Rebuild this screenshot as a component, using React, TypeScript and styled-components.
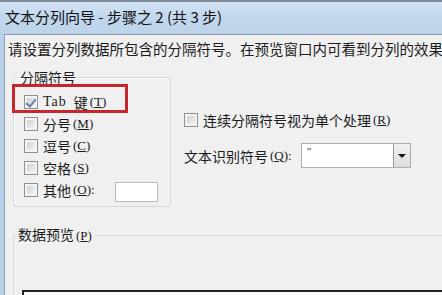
import styled, {createGlobalStyle} from 'styled-components';

const GlobalStyle = createGlobalStyle`
  html, body {
    margin: 0;
    padding: 0;
    background: #f0f0f0;
  }
  body {
    font-family: "Noto Sans CJK SC", "Noto Sans", sans-serif;
    color: #1b1b1b;
  }
`;

const separators = [
  {label: '分号', key: 'M'},
  {label: '逗号', key: 'C'},
  {label: '空格', key: 'S'},
];

export default function App() {
  return (
    <>
      <GlobalStyle />
      <Window>
        <TitleBar>文本分列向导 - 步骤之 2 (共 3 步)</TitleBar>
        <Frame>
          <Body>
            <Instruction>请设置分列数据所包含的分隔符号。在预览窗口内可看到分列的效果</Instruction>
            <Options>
              <GroupBox $width={158}>
                <Legend>分隔符号</Legend>
                <OptionRow $highlight>
                  <CheckBox>
                    <CheckMark />
                  </CheckBox>
                  <TabText>Tab</TabText>
                  <Label>键</Label>
                  <Mnemonic>
                    (<u>T</u>)
                  </Mnemonic>
                </OptionRow>
                {separators.map(item => (
                  <OptionRow key={item.key}>
                    <CheckBox />
                    <Label>{item.label}</Label>
                    <Mnemonic>
                      (<u>{item.key}</u>)
                    </Mnemonic>
                  </OptionRow>
                ))}
                <OptionRow>
                  <CheckBox />
                  <Label>其他</Label>
                  <Mnemonic>
                    (<u>O</u>):
                  </Mnemonic>
                  <OtherInput />
                </OptionRow>
              </GroupBox>

              <SideColumn>
                <OptionRow>
                  <CheckBox />
                  <Label>连续分隔符号视为单个处理</Label>
                  <Mnemonic>
                    (<u>R</u>)
                  </Mnemonic>
                </OptionRow>
                <QualifierRow>
                  <Label>文本识别符号</Label>
                  <Mnemonic>
                    (<u>Q</u>):
                  </Mnemonic>
                  <Combo>
                    <ComboValue>"</ComboValue>
                    <ComboButton>
                      <Arrow />
                    </ComboButton>
                  </Combo>
                </QualifierRow>
              </SideColumn>
            </Options>

            <PreviewGroup>
              <Legend>
                数据预览<Mnemonic>
                  (<u>P</u>)
                </Mnemonic>
              </Legend>
              <PreviewBox />
            </PreviewGroup>
          </Body>
        </Frame>
      </Window>
    </>
  );
}

const Window = styled.div`
  width: 442px;
  height: 295px;
  overflow: hidden;
  display: flex;
  flex-direction: column;
`;

const TitleBar = styled.div`
  height: 32px;
  box-sizing: border-box;
  border-top: 2px solid #7d8a99;
  padding: 4px 0 0 5px;
  background: linear-gradient(180deg, #d3e3f3 0%, #c3d8ee 45%, #bcd3ea 100%);
  font-size: 15px;
  line-height: 22px;
  color: #111;
  white-space: nowrap;
  flex-shrink: 0;
`;

const Frame = styled.div`
  flex: 1;
  display: flex;
  border-left: 4px solid #b8d0ea;
  padding-top: 2px;
  background: #bcd3ea;
`;

const Body = styled.div`
  flex: 1;
  background: #f0f0f0;
  border-left: 1px solid #8e9cad;
  border-top: 1px solid #8e9cad;
  padding: 5px 0 0 3px;
  min-width: 0;
`;

const Instruction = styled.div`
  font-size: 14.5px;
  line-height: 17px;
  white-space: nowrap;
`;

const Options = styled.div`
  display: flex;
  align-items: flex-start;
  gap: 13px;
  margin: 12px 0 0 5px;
`;

const GroupBox = styled.fieldset<{$width: number}>`
  box-sizing: border-box;
  width: ${p => p.$width}px;
  margin: 0;
  padding: 6px 0 5px 10px;
  border: 1px solid #d3dae1;
  border-radius: 3px;
  box-shadow: inset 1px 1px 0 #ffffff;
`;

const Legend = styled.legend`
  padding: 0 2px;
  margin-left: -6px;
  font-size: 14px;
  line-height: 16px;
  white-space: nowrap;
`;

const OptionRow = styled.div<{$highlight?: boolean}>`
  position: relative;
  display: flex;
  align-items: center;
  height: 22px;
  white-space: nowrap;

  ${p =>
    p.$highlight &&
    `
    &::after {
      content: '';
      position: absolute;
      left: -12px;
      top: -7px;
      width: 116px;
      height: 29px;
      box-sizing: border-box;
      border: 3px solid #c4272e;
    }
  `}
`;

const CheckBox = styled.span`
  position: relative;
  box-sizing: border-box;
  width: 14px;
  height: 14px;
  margin-right: 5px;
  flex-shrink: 0;
  border: 1px solid #8f9090;
  background: #f4f4f4;

  &::before {
    content: '';
    position: absolute;
    inset: 2px;
    background: linear-gradient(135deg, #cfd0d2 0%, #e6e6e8 60%, #f2f2f3 100%);
  }
`;

const CheckMark = styled.span`
  position: absolute;
  left: 3px;
  top: 1px;
  width: 4px;
  height: 8px;
  border: solid #6f82a6;
  border-width: 0 2px 2px 0;
  transform: rotate(40deg);
  z-index: 1;
`;

const Label = styled.span`
  font-size: 14px;
  line-height: 16px;
`;

const TabText = styled.span`
  font-family: "Liberation Serif", "DejaVu Serif", serif;
  font-size: 14px;
  letter-spacing: 1px;
  margin-right: 7px;
`;

const Mnemonic = styled.span`
  font-family: "Liberation Serif", "DejaVu Serif", serif;
  font-size: 13px;
  margin-left: 2px;

  u {
    text-decoration-thickness: 1px;
    text-underline-offset: 1px;
  }
`;

const OtherInput = styled.span`
  display: block;
  box-sizing: border-box;
  width: 43px;
  height: 20px;
  margin-left: 20px;
  margin-top: 3px;
  background: #fff;
  border: 1px solid #b9b9b9;
`;

const SideColumn = styled.div`
  display: flex;
  flex-direction: column;
  gap: 12px;
  margin-top: 40px;
`;

const QualifierRow = styled.div`
  display: flex;
  align-items: center;
  white-space: nowrap;
`;

const Combo = styled.div`
  display: flex;
  box-sizing: border-box;
  width: 110px;
  height: 25px;
  margin-left: 9px;
  border: 1px solid #abadb3;
  background: #fff;
`;

const ComboValue = styled.span`
  flex: 1;
  padding: 1px 0 0 5px;
  font-family: "Liberation Serif", serif;
  font-size: 11px;
  line-height: 12px;
`;

const ComboButton = styled.span`
  display: flex;
  align-items: center;
  justify-content: center;
  width: 16px;
  border-left: 1px solid #9a9a9a;
  background: linear-gradient(180deg, #f2f2f2 0%, #dcdcdc 100%);
`;

const Arrow = styled.span`
  width: 0;
  height: 0;
  border-left: 4px solid transparent;
  border-right: 4px solid transparent;
  border-top: 4px solid #111;
`;

const PreviewGroup = styled.fieldset`
  box-sizing: border-box;
  width: 460px;
  margin: 19px 0 0 5px;
  padding: 46px 0 0 8px;
  border: 1px solid #d3dae1;
  border-bottom: none;
  border-radius: 3px 0 0 0;
`;

const PreviewBox = styled.div`
  height: 40px;
  border: 2px solid #222;
  border-right: none;
  border-bottom: none;
  background: #fafafa;
`;
